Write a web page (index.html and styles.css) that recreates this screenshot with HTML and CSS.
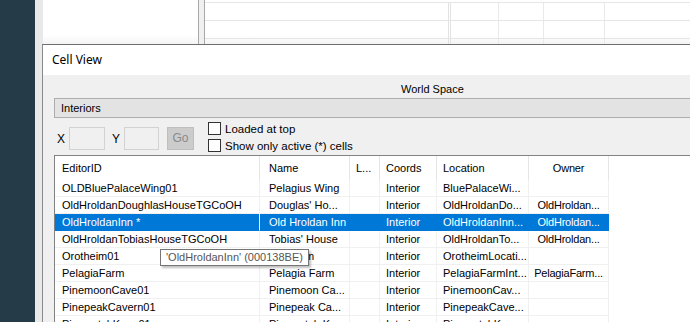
FILE: index.html
```html
<!DOCTYPE html>
<html lang="en">
<head>
    <meta charset="UTF-8">
    <title>Cell View</title>
    <link rel="stylesheet" href="styles.css">
</head>
<body>
    <div class="desktop">
        <div class="sidebar"></div>
        <div class="frame"></div>
        <div class="main">
            <div class="top-panel">
                <div class="top-left"></div>
                <div class="splitter"></div>
                <div class="top-right">
                    <div class="grid-row"><span class="c1"></span><span class="c2"></span><span class="c3"></span><span class="c4"></span><span class="c5"></span></div>
                    <div class="grid-row"><span class="c1"></span><span class="c2"></span><span class="c3"></span><span class="c4"></span><span class="c5"></span></div>
                    <div class="grid-row"><span class="c1"></span><span class="c2"></span><span class="c3"></span><span class="c4"></span><span class="c5"></span></div>
                </div>
            </div>

            <div class="dialog">
                <div class="title-bar">Cell View</div>
                <div class="dialog-body">
                    <div class="ws-row">World Space</div>
                    <div class="interiors">Interiors</div>

                    <div class="filter">
                        <span class="lbl">X</span>
                        <span class="field x-field"></span>
                        <span class="lbl">Y</span>
                        <span class="field y-field"></span>
                        <span class="go-btn">Go</span>
                        <div class="checks">
                            <label class="check"><span class="box"></span>Loaded at top</label>
                            <label class="check"><span class="box"></span>Show only active (*) cells</label>
                        </div>
                    </div>

                    <div class="list">
                        <div class="list-head">
                            <span class="cell first">EditorID</span>
                            <span class="cell name">Name</span>
                            <span class="cell">L...</span>
                            <span class="cell">Coords</span>
                            <span class="cell">Location</span>
                            <span class="cell owner">Owner</span>
                            <span class="cell fill"></span>
                        </div>
                        <div class="row">
                            <span class="cell first">OLDBluePalaceWing01</span>
                            <span class="cell name">Pelagius Wing</span>
                            <span class="cell"></span>
                            <span class="cell">Interior</span>
                            <span class="cell">BluePalaceWi...</span>
                            <span class="cell owner"></span>
                            <span class="cell fill"></span>
                        </div>
                        <div class="row">
                            <span class="cell first">OldHroldanDoughlasHouseTGCoOH</span>
                            <span class="cell name">Douglas' Ho...</span>
                            <span class="cell"></span>
                            <span class="cell">Interior</span>
                            <span class="cell">OldHroldanDo...</span>
                            <span class="cell owner">OldHroldan...</span>
                            <span class="cell fill"></span>
                        </div>
                        <div class="row selected">
                            <span class="cell first">OldHroldanInn *</span>
                            <span class="cell name">Old Hroldan Inn</span>
                            <span class="cell"></span>
                            <span class="cell">Interior</span>
                            <span class="cell">OldHroldanInn...</span>
                            <span class="cell owner">OldHroldan...</span>
                            <span class="cell fill"></span>
                        </div>
                        <div class="row">
                            <span class="cell first">OldHroldanTobiasHouseTGCoOH</span>
                            <span class="cell name">Tobias' House</span>
                            <span class="cell"></span>
                            <span class="cell">Interior</span>
                            <span class="cell">OldHroldanTo...</span>
                            <span class="cell owner">OldHroldan...</span>
                            <span class="cell fill"></span>
                        </div>
                        <div class="row">
                            <span class="cell first">Orotheim01</span>
                            <span class="cell name">Orotheim</span>
                            <span class="cell"></span>
                            <span class="cell">Interior</span>
                            <span class="cell">OrotheimLocati...</span>
                            <span class="cell owner"></span>
                            <span class="cell fill"></span>
                        </div>
                        <div class="row">
                            <span class="cell first">PelagiaFarm</span>
                            <span class="cell name">Pelagia Farm</span>
                            <span class="cell"></span>
                            <span class="cell">Interior</span>
                            <span class="cell">PelagiaFarmInt...</span>
                            <span class="cell owner">PelagiaFarm...</span>
                            <span class="cell fill"></span>
                        </div>
                        <div class="row">
                            <span class="cell first">PinemoonCave01</span>
                            <span class="cell name">Pinemoon Ca...</span>
                            <span class="cell"></span>
                            <span class="cell">Interior</span>
                            <span class="cell">PinemoonCav...</span>
                            <span class="cell owner"></span>
                            <span class="cell fill"></span>
                        </div>
                        <div class="row">
                            <span class="cell first">PinepeakCavern01</span>
                            <span class="cell name">Pinepeak Ca...</span>
                            <span class="cell"></span>
                            <span class="cell">Interior</span>
                            <span class="cell">PinepeakCave...</span>
                            <span class="cell owner"></span>
                            <span class="cell fill"></span>
                        </div>
                        <div class="row">
                            <span class="cell first">PinewatchKeep01</span>
                            <span class="cell name">Pinewatch Keep</span>
                            <span class="cell"></span>
                            <span class="cell">Interior</span>
                            <span class="cell">PinewatchKe...</span>
                            <span class="cell owner"></span>
                            <span class="cell fill"></span>
                        </div>
                    </div>
                </div>
            </div>
        </div>
    </div>

    <div class="tooltip">'OldHroldanInn' (000138BE)</div>
</body>
</html>
```

FILE: styles.css
```css
html, body {
    margin: 0;
    padding: 0;
}
body {
    width: 690px;
    height: 322px;
    overflow: hidden;
    position: relative;
    background-color: #253b47;
    font-family: 'Liberation Sans', Arial, sans-serif;
    font-size: 11px;
    color: #000;
}
.desktop {
    display: flex;
    height: 322px;
}
.sidebar {
    width: 35px;
    flex: none;
    background-color: #253b47;
}
.frame {
    width: 7px;
    flex: none;
    background-color: #e9e9e9;
}
.main {
    flex: 1;
    display: flex;
    flex-direction: column;
    min-width: 0;
}

/* parent window behind the dialog */
.top-panel {
    height: 44px;
    flex: none;
    display: flex;
    border-left: 1px solid #e9e9e9;
    background: linear-gradient(#fff 80%, #f4f4f4);
}
.top-left {
    width: 155px;
    flex: none;
}
.splitter {
    width: 5px;
    flex: none;
    background-color: #f0f0f0;
    border-left: 1px solid #a8a8a8;
    border-right: 1px solid #a8a8a8;
}
.top-right {
    flex: 1;
    padding-top: 2px;
}
.grid-row {
    display: grid;
    grid-template-columns: 246px 48px 45px 61px 1fr;
    height: 17px;
    border-top: 1px solid #e6e6e6;
}
.grid-row span {
    border-right: 1px solid #e9e9e9;
}
.grid-row .c1 {
    border-right: 3px double #e2e2e2;
}
.grid-row .c5 {
    border-right: none;
}

/* dialog */
.dialog {
    flex: 1;
    display: flex;
    flex-direction: column;
    border-top: 1px solid #6e6e6e;
    border-left: 1px solid #8a8a8a;
    min-height: 0;
}
.title-bar {
    height: 30px;
    flex: none;
    background-color: #fff;
    font-family: 'Noto Sans', 'Open Sans', sans-serif;
    font-size: 12px;
    line-height: 30px;
    padding-left: 9px;
}
.dialog-body {
    flex: 1;
    background-color: #f0f0f0;
    padding-left: 11px;
    min-height: 0;
    overflow: hidden;
}
.ws-row {
    height: 18px;
    padding-top: 5px;
    line-height: 18px;
    padding-left: 347px;
}
.interiors {
    height: 18px;
    line-height: 18px;
    background-color: #e3e3e3;
    border: 1px solid #adadad;
    border-right: none;
    padding-left: 6px;
}
.filter {
    display: flex;
    align-items: flex-start;
    height: 37px;
    padding-left: 3px;
}
.lbl {
    width: 12px;
    margin-top: 15px;
    line-height: 12px;
    font-size: 12px;
}
.field {
    height: 21px;
    margin-top: 9px;
    border: 1px solid #d2d2d2;
    background-color: #f0f0f0;
}
.x-field {
    width: 34px;
    margin-right: 7px;
}
.y-field {
    width: 33px;
    margin-right: 8px;
}
.go-btn {
    width: 25px;
    height: 21px;
    margin-top: 9px;
    margin-right: 14px;
    border: 1px solid #bfbfbf;
    background-color: #cccccc;
    color: #8a8a8a;
    font-size: 12px;
    line-height: 21px;
    text-align: center;
}
.checks {
    display: flex;
    flex-direction: column;
    margin-top: 2px;
}
.check {
    display: flex;
    align-items: center;
    height: 17px;
    font-size: 11.5px;
}
.box {
    width: 11px;
    height: 11px;
    border: 1px solid #333;
    background-color: #fff;
    margin-right: 4px;
}

/* list view */
.list {
    background-color: #fff;
    border-top: 1px solid #828282;
    border-left: 1px solid #828282;
    height: 200px;
}
.list-head,
.row {
    display: grid;
    grid-template-columns: 205px 90px 30px 57px 92px 80px 1fr;
    white-space: nowrap;
}
.list-head {
    height: 24px;
    line-height: 24px;
}
.list-head .cell {
    border-right: 1px solid #e5e5e5;
}
.row {
    height: 17px;
    line-height: 16px;
}
.cell {
    overflow: hidden;
    padding-left: 6px;
    box-sizing: border-box;
}
.row .cell {
    border-right: 1px solid #f0f0f0;
    border-bottom: 1px solid #f0f0f0;
}
.cell.first {
    padding-left: 7px;
}
.cell.name {
    padding-left: 9px;
}
.cell.owner {
    padding-left: 0;
    text-align: center;
    letter-spacing: -0.2px;
}
.list-head .fill,
.row .fill {
    border-right: none;
}
.row .fill {
    border-bottom-color: #fff;
}
.row.selected .cell {
    background-color: #0078d7;
    color: #fff;
    border-right-color: #0078d7;
    border-bottom-color: #0078d7;
}
.row.selected .cell.first {
    border-right-color: #fff;
}
.row.selected .fill {
    background-color: #fff;
    border-bottom-color: #fff;
}

.tooltip {
    position: absolute;
    left: 160px;
    top: 249px;
    height: 15px;
    line-height: 15px;
    padding: 0 5px;
    background-color: #fff;
    border: 1px solid #767676;
    box-shadow: 2px 2px 2px rgba(0, 0, 0, 0.25);
    font-size: 11px;
    color: #555;
}
```
